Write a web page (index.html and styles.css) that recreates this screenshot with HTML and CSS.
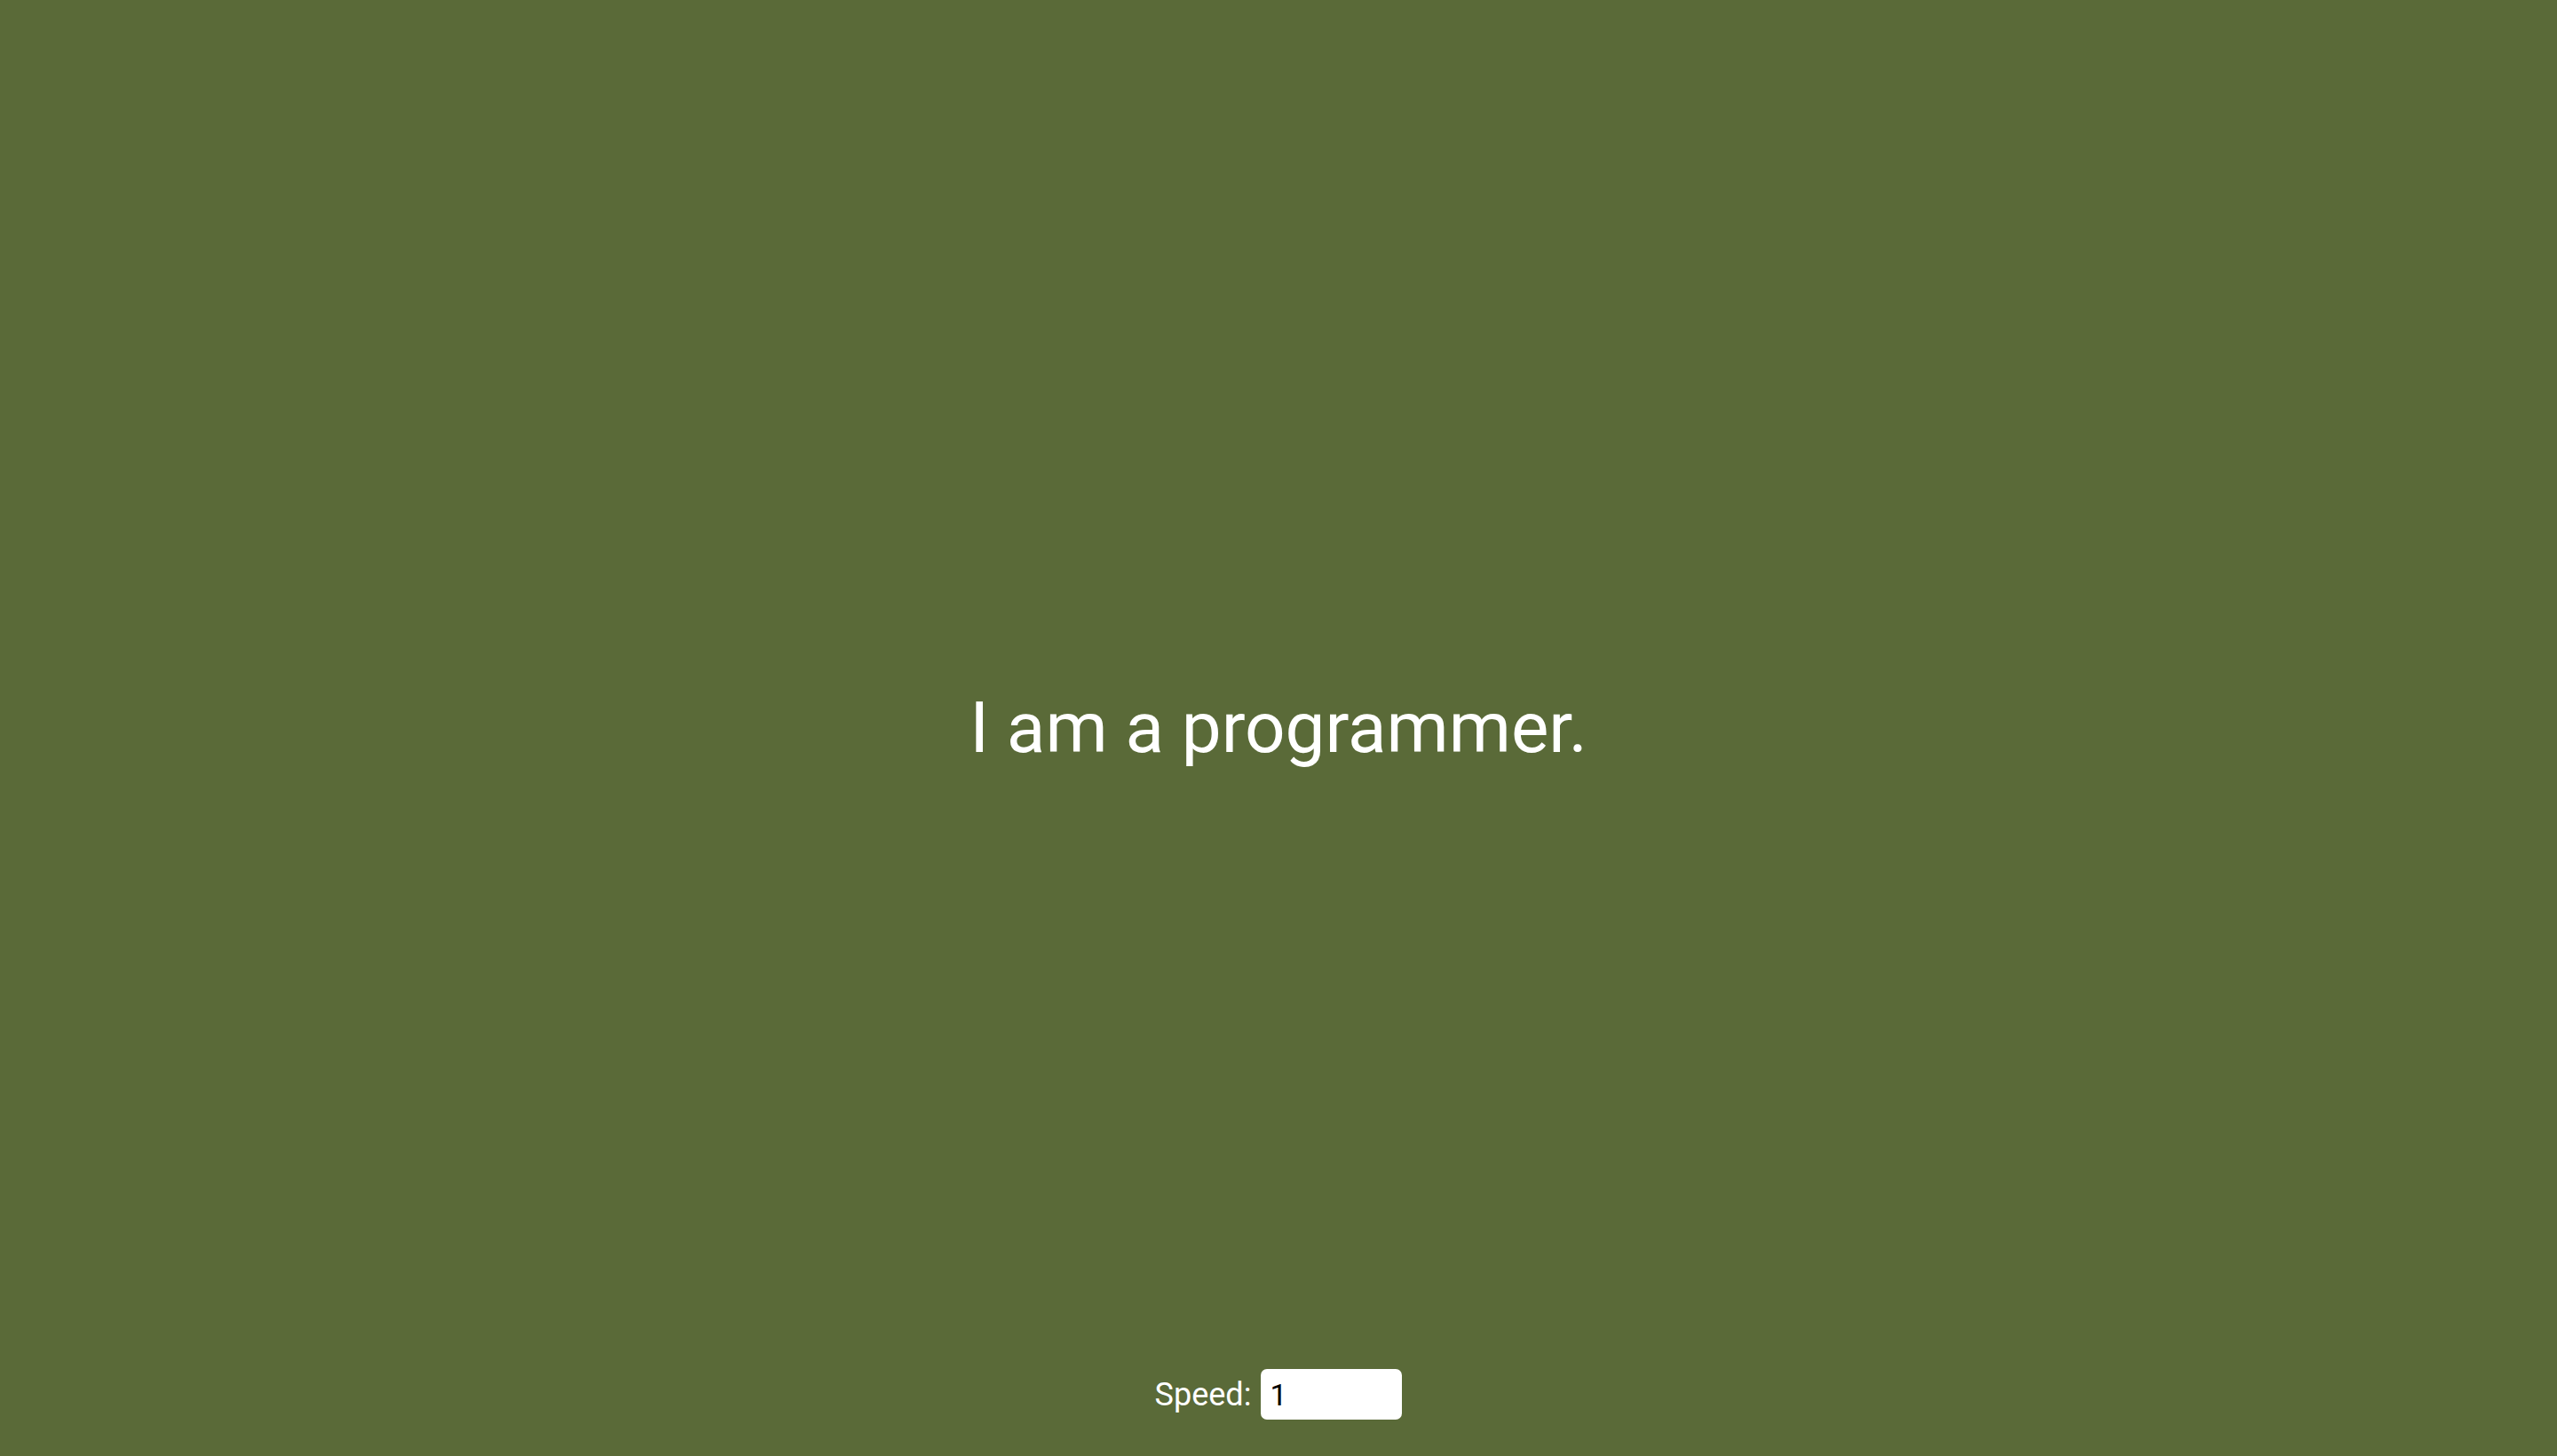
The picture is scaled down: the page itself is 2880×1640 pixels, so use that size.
FILE: index.html
```html
<!DOCTYPE html>
<html lang="en">
<head>
<meta charset="utf-8">
<title>Typewriter</title>
<link rel="stylesheet" href="styles.css">
</head>
<body>
<div class="page">
  <div class="spacer"></div>
  <h1 class="headline">I am a programmer.</h1>
  <div class="controls">
    <label class="speed-label" for="speed">Speed:</label>
    <input class="speed-input" id="speed" type="text" value="1">
  </div>
</div>
</body>
</html>
```

FILE: styles.css
```css
html, body {
  margin: 0;
  padding: 0;
}
body {
  background: #5a6a38;
  font-family: Roboto, "Noto Sans", sans-serif;
  color: #ffffff;
}
.page {
  height: 100vh;
  display: grid;
  grid-template-rows: 1fr auto 1fr;
  justify-items: center;
}
.headline {
  margin: 0;
  font-size: 80px;
  font-weight: 400;
  line-height: normal;
  color: #ffffff;
}
.controls {
  align-self: end;
  display: flex;
  align-items: center;
  gap: 11px;
  padding-bottom: 41px;
}
.speed-label {
  font-size: 36px;
  color: #ffffff;
}
.speed-input {
  box-sizing: border-box;
  width: 159px;
  height: 57px;
  border: none;
  border-radius: 7px;
  background: #ffffff;
  padding: 0 10px;
  font-family: Roboto, "Noto Sans", sans-serif;
  font-size: 34px;
  color: #000000;
  outline: none;
}
```
